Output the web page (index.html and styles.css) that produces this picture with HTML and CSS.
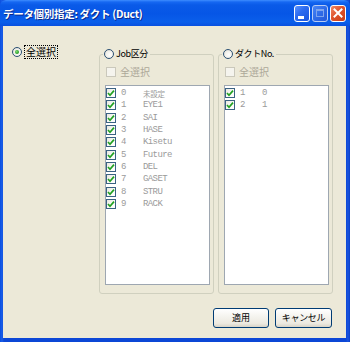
FILE: index.html
```html
<!DOCTYPE html>
<html lang="ja">
<head>
<meta charset="utf-8">
<title>データ個別指定</title>
<link rel="stylesheet" href="styles.css">
</head>
<body>
<div class="window">
  <div class="titlebar">
    <span class="title">データ個別指定: ダクト (Duct)</span>
    <div class="tbtns">
      <span class="tb tb-min"><span class="min-bar"></span></span>
      <span class="tb tb-max"><span class="max-box"></span></span>
      <span class="tb tb-close">
        <svg width="16" height="17" viewBox="0 0 16 17"><path d="M4.5 4.5 L11.5 11.5 M11.5 4.5 L4.5 11.5" stroke="#fff" stroke-width="2" stroke-linecap="square"/></svg>
      </span>
    </div>
  </div>
  <div class="client">
    <div class="content">
      <div class="leftcol">
        <div class="opt">
          <span class="radio on"></span>
          <span class="focus">全選択</span>
        </div>
      </div>
      <fieldset class="group">
        <legend class="legend"><span class="radio"></span><span class="legend-text">Job区分</span></legend>
        <div class="allrow"><span class="cb cb-dis"></span><span class="dis-text">全選択</span></div>
        <div class="list">
          <div class="row"><span class="cb"><svg width="8" height="8" viewBox="0 0 8 8"><path d="M1 4 L3 6.2 L7 1.6" fill="none" stroke="#21a121" stroke-width="1.7"/></svg></span><span class="num">0</span><span class="name cjk">未設定</span></div>
          <div class="row"><span class="cb"><svg width="8" height="8" viewBox="0 0 8 8"><path d="M1 4 L3 6.2 L7 1.6" fill="none" stroke="#21a121" stroke-width="1.7"/></svg></span><span class="num">1</span><span class="name">EYE1</span></div>
          <div class="row"><span class="cb"><svg width="8" height="8" viewBox="0 0 8 8"><path d="M1 4 L3 6.2 L7 1.6" fill="none" stroke="#21a121" stroke-width="1.7"/></svg></span><span class="num">2</span><span class="name">SAI</span></div>
          <div class="row"><span class="cb"><svg width="8" height="8" viewBox="0 0 8 8"><path d="M1 4 L3 6.2 L7 1.6" fill="none" stroke="#21a121" stroke-width="1.7"/></svg></span><span class="num">3</span><span class="name">HASE</span></div>
          <div class="row"><span class="cb"><svg width="8" height="8" viewBox="0 0 8 8"><path d="M1 4 L3 6.2 L7 1.6" fill="none" stroke="#21a121" stroke-width="1.7"/></svg></span><span class="num">4</span><span class="name">Kisetu</span></div>
          <div class="row"><span class="cb"><svg width="8" height="8" viewBox="0 0 8 8"><path d="M1 4 L3 6.2 L7 1.6" fill="none" stroke="#21a121" stroke-width="1.7"/></svg></span><span class="num">5</span><span class="name">Future</span></div>
          <div class="row"><span class="cb"><svg width="8" height="8" viewBox="0 0 8 8"><path d="M1 4 L3 6.2 L7 1.6" fill="none" stroke="#21a121" stroke-width="1.7"/></svg></span><span class="num">6</span><span class="name">DEL</span></div>
          <div class="row"><span class="cb"><svg width="8" height="8" viewBox="0 0 8 8"><path d="M1 4 L3 6.2 L7 1.6" fill="none" stroke="#21a121" stroke-width="1.7"/></svg></span><span class="num">7</span><span class="name">GASET</span></div>
          <div class="row"><span class="cb"><svg width="8" height="8" viewBox="0 0 8 8"><path d="M1 4 L3 6.2 L7 1.6" fill="none" stroke="#21a121" stroke-width="1.7"/></svg></span><span class="num">8</span><span class="name">STRU</span></div>
          <div class="row"><span class="cb"><svg width="8" height="8" viewBox="0 0 8 8"><path d="M1 4 L3 6.2 L7 1.6" fill="none" stroke="#21a121" stroke-width="1.7"/></svg></span><span class="num">9</span><span class="name">RACK</span></div>
        </div>
      </fieldset>
      <fieldset class="group">
        <legend class="legend"><span class="radio"></span><span class="legend-text">ダクトNo.</span></legend>
        <div class="allrow"><span class="cb cb-dis"></span><span class="dis-text">全選択</span></div>
        <div class="list">
          <div class="row"><span class="cb"><svg width="8" height="8" viewBox="0 0 8 8"><path d="M1 4 L3 6.2 L7 1.6" fill="none" stroke="#21a121" stroke-width="1.7"/></svg></span><span class="num">1</span><span class="name">0</span></div>
          <div class="row"><span class="cb"><svg width="8" height="8" viewBox="0 0 8 8"><path d="M1 4 L3 6.2 L7 1.6" fill="none" stroke="#21a121" stroke-width="1.7"/></svg></span><span class="num">2</span><span class="name">1</span></div>
        </div>
      </fieldset>
    </div>
    <div class="buttons">
      <button class="btn" type="button">適用</button>
      <button class="btn" type="button">キャンセル</button>
    </div>
  </div>
</div>
</body>
</html>
```
FILE: styles.css
```css
* { box-sizing: border-box; }
html, body { margin: 0; padding: 0; }
body {
  width: 350px;
  height: 342px;
  font-family: "Noto Sans CJK JP", "DejaVu Sans", sans-serif;
  font-size: 10px;
  color: #000;
  background: #fff;
}
.window {
  width: 350px;
  height: 342px;
  display: flex;
  flex-direction: column;
  background: linear-gradient(to right, #0a4ee0 0, #1a5ee8 2px, #0c47d6 4px, #0c47d6 346px, #1a55df 348px, #0a3ec8 350px);
}
.titlebar {
  height: 26px;
  flex: 0 0 26px;
  display: flex;
  align-items: center;
  justify-content: space-between;
  padding: 0 4px 0 3px;
  background: linear-gradient(to bottom, #3e8dff 0, #1668f2 2px, #0a5ae8 5px, #0656e6 14px, #0a5fea 22px, #0950e0 26px);
  border-radius: 6px 6px 0 0;
}
.title {
  color: #fff;
  font-weight: bold;
  font-size: 10.5px;
  letter-spacing: -0.3px;
  text-shadow: 1px 1px 0 #0a2a8c;
  white-space: nowrap;
}
.tbtns {
  display: flex;
  gap: 2px;
  margin-top: 1px;
}
.tb {
  width: 16px;
  height: 17px;
  border: 1px solid #fff;
  border-radius: 3px;
  position: relative;
  display: block;
}
.tb-min {
  background: linear-gradient(135deg, #5a93ff 0, #2d6cf0 40%, #1a55df 100%);
}
.min-bar {
  position: absolute;
  left: 3px;
  top: 10px;
  width: 6px;
  height: 3px;
  background: #fff;
}
.tb-max {
  background: linear-gradient(135deg, #4a86f6 0, #2f6be8 50%, #2358d8 100%);
  border-color: #b8ccf4;
}
.max-box {
  position: absolute;
  left: 3px;
  top: 3px;
  width: 8px;
  height: 8px;
  border: 1px solid #7da4ee;
  border-top-width: 2px;
}
.tb-close {
  background: linear-gradient(135deg, #f08a68 0, #e0532c 45%, #c83c16 100%);
}
.tb-close svg { position: absolute; left: -1px; top: -1px; }

.client {
  flex: 1;
  margin: 0 4px 4px 3px;
  background: #ece9d8;
  padding: 22px 13px 10px 9px;
  display: flex;
  flex-direction: column;
}
.content {
  flex: 1;
  display: flex;
  gap: 4px;
  min-height: 0;
}
.leftcol {
  flex: 0 0 83px;
  margin-top: -3px;
}
.opt {
  display: flex;
  align-items: center;
  gap: 2px;
  height: 14px;
}
.focus {
  border: 1px dotted #000;
  padding: 0 1px;
  line-height: 12px;
  font-size: 10px;
  height: 14px;
}
.radio {
  width: 10px;
  height: 10px;
  flex: 0 0 10px;
  border-radius: 50%;
  border: 1px solid #2a4f73;
  background: radial-gradient(circle at 60% 60%, #ffffff 0, #f2f1eb 50%, #d8d6cc 100%);
  position: relative;
  display: inline-block;
}
.radio.on::after {
  content: "";
  position: absolute;
  left: 2px;
  top: 2px;
  width: 4px;
  height: 4px;
  border-radius: 50%;
  background: radial-gradient(circle at 40% 40%, #7fdc6f 0, #2ba02b 60%, #1a7a1a 100%);
}
.group {
  flex: 0 0 115px;
  margin: 0;
  min-width: 0;
  border: 1px solid #d0d0bf;
  border-radius: 3px;
  padding: 0 3px 8px 5px;
  display: flex;
  flex-direction: column;
}
.legend {
  display: flex;
  align-items: center;
  gap: 2px;
  height: 12px;
  padding: 0 2px 0 1px;
  margin-left: -2px;
  font-size: 9px;
  line-height: 12px;
}
.legend-text { letter-spacing: -0.4px; }
.allrow {
  display: flex;
  align-items: center;
  gap: 4px;
  height: 13px;
  margin-top: 5px;
}
.dis-text {
  color: #aca899;
  font-size: 10px;
}
.cb {
  width: 10px;
  height: 10px;
  flex: 0 0 10px;
  border: 1px solid #3a6283;
  background: linear-gradient(135deg, #e8e8e0 0, #fbfbf9 60%, #ffffff 100%);
  display: flex;
  align-items: center;
  justify-content: center;
}
.cb-dis {
  margin-left: 1px;
  border-color: #cac8bb;
  background: #f5f4ee;
}
.list {
  flex: 1;
  margin-top: 7px;
  background: #fff;
  border: 1px solid #9ea7b1;
  padding-top: 1px;
}
.row {
  display: flex;
  align-items: center;
  height: 12.3px;
  color: #9a9a9a;
  font-family: "Liberation Mono", "DejaVu Sans Mono", "Noto Sans CJK JP", monospace;
  font-size: 9px;
  letter-spacing: -0.6px;
}
.num {
  width: 22px;
  margin-left: 5px;
}
.name.cjk {
  font-family: "Noto Sans CJK JP", sans-serif;
  font-size: 7.5px;
  letter-spacing: -0.3px;
}
.buttons {
  display: flex;
  justify-content: flex-end;
  gap: 6px;
  margin-top: 14px;
  padding-right: 1px;
}
.btn {
  height: 20px;
  width: 56px;
  padding: 0;
  border: 1px solid #003c74;
  border-radius: 3px;
  background: linear-gradient(to bottom, #ffffff 0, #f5f4ef 40%, #ece9e0 80%, #d8d3c6 100%);
  font-family: "Noto Sans CJK JP", sans-serif;
  font-size: 9px;
  color: #000;
  line-height: 18px;
}
.btn + .btn { width: 57px; letter-spacing: -0.3px; }
```
